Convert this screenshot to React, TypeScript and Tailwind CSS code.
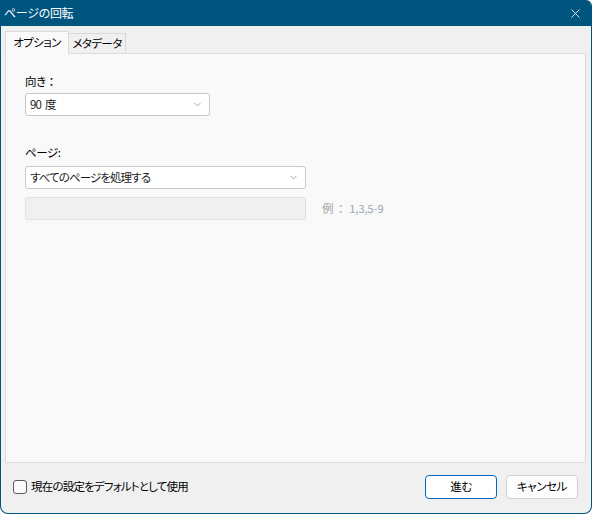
import type { ReactNode } from "react"
import { X, ChevronDown } from "lucide-react"

const font = "font-['Noto_Sans_CJK_JP','Noto_Sans',sans-serif] [font-feature-settings:'palt']"

function Select({ children, width }: { children: ReactNode; width: string }) {
  return (
    <div
      className={`${width} h-[23px] flex items-center justify-between pl-[4px] pr-[6px] bg-white border border-[#c8c8c8] rounded-[3px] text-[11.5px] tracking-[-0.9px] text-[#1b1b1b]`}
    >
      <span>{children}</span>
      <ChevronDown className="w-[11px] h-[11px] text-[#707070]" strokeWidth={1.3} />
    </div>
  )
}

export default function App() {
  return (
    <div className={`w-[592px] h-[514px] bg-white ${font}`}>
      <div className="w-full h-full flex flex-col bg-[#f0f0f0] border-x border-b border-[#00557f] rounded-tr-[6px] rounded-b-[8px] overflow-hidden">
        {/* title bar */}
        <div className="h-[26px] shrink-0 bg-[#00557f] flex items-center justify-between pl-[4px] pr-[9px] -mx-px">
          <span className="text-[12px] tracking-[-0.3px] text-white">ページの回転</span>
          <X className="w-[15px] h-[15px] text-white" strokeWidth={1.3} />
        </div>

        {/* tabs */}
        <div className="flex items-end pl-[4px] pt-[4px] h-[27px] shrink-0 text-[11.5px] tracking-[-0.6px]">
          <div className="relative z-10 -mb-px w-[64px] h-[23px] flex items-center justify-center bg-[#f9f9f9] border border-b-0 border-[#d9d9d9] text-black">
            オプション
          </div>
          <div className="w-[57px] h-[20px] flex items-center justify-center bg-[#f0f0f0] border border-l-0 border-b-0 border-[#d9d9d9] text-black">
            メタデータ
          </div>
        </div>

        {/* panel */}
        <div className="mx-[4px] mr-[5px] h-[410px] shrink-0 bg-[#f9f9f9] border border-[#dcdcdc] pl-[19px] pt-[19px] text-[11.5px] tracking-[-0.4px] text-black">
          <div className="leading-[16px]">
            向き<span className="[font-feature-settings:normal]">：</span>
          </div>
          <div className="mt-[4px]">
            <Select width="w-[185px]">
              90<span className="ml-[4px]">度</span>
            </Select>
          </div>

          <div className="leading-[16px] mt-[28px]">ページ:</div>
          <div className="mt-[6px]">
            <Select width="w-[281px]">すべてのページを処理する</Select>
          </div>

          <div className="mt-[8px] flex items-center">
            <div className="w-[281px] h-[23px] bg-[#f0f0f0] border border-[#e2e2e2] rounded-[2px]" />
            <span className="ml-[16px] text-[#a6a6a6]">
              例<span className="ml-[2px] [font-feature-settings:normal]">：</span>
              <span className="ml-[3px] text-[11px] tracking-normal text-[#9aa6b4]">1,3,5-9</span>
            </span>
          </div>
        </div>

        {/* footer */}
        <div className="flex-1 flex items-center justify-between pl-[12px] pr-[13px] pb-[2px]">
          <label className="flex items-center gap-[4px] text-[11.5px] tracking-[-0.8px] text-black">
            <span className="w-[14px] h-[14px] border border-[#5a5a5a] rounded-[3px] bg-[#fbfbfb]" />
            現在の設定をデフォルトとして使用
          </label>
          <div className="flex gap-[9px] text-[11.5px] tracking-[-0.4px]">
            <button className="w-[72px] h-[24px] bg-white border border-[#0067c0] rounded-[4px] text-black">
              進む
            </button>
            <button className="w-[72px] h-[24px] bg-[#fdfdfd] border border-[#d0d0d0] rounded-[4px] text-black">
              キャンセル
            </button>
          </div>
        </div>
      </div>
    </div>
  )
}
